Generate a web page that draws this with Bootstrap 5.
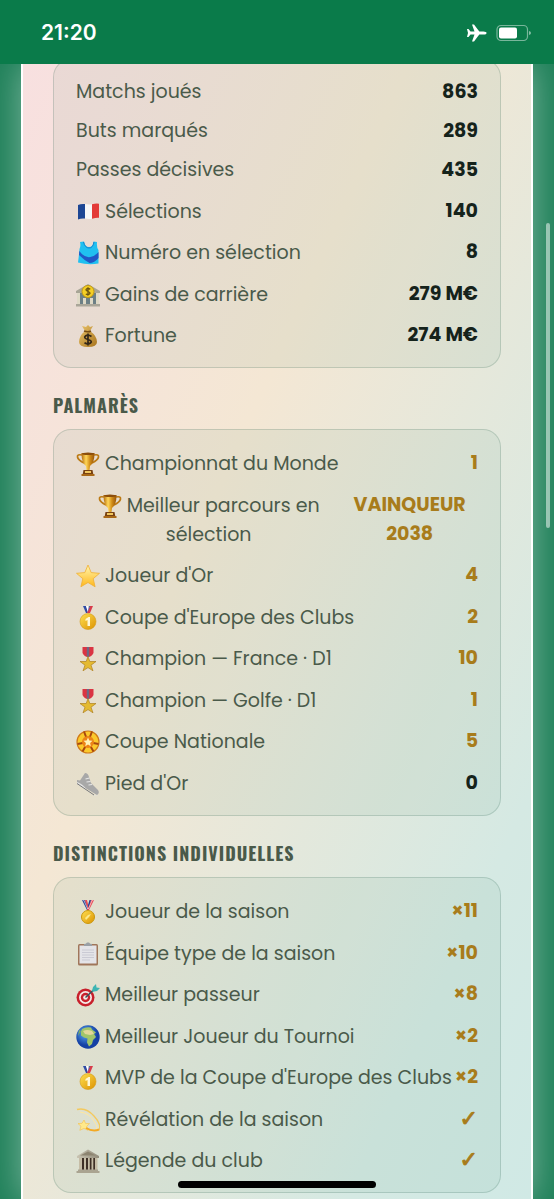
<!DOCTYPE html>
<html lang="fr">
<head>
<meta charset="utf-8">
<meta name="viewport" content="width=device-width, initial-scale=1">
<title>Palmarès du joueur</title>
<link href="https://cdn.jsdelivr.net/npm/bootstrap@5.3.0/dist/css/bootstrap.min.css" rel="stylesheet">
<style>
  :root { --pitch: #0a7b4a; --ink: #15231b; --label: #4a5a4a; --gold: #a87c1b; }
  body { background: #1f8059; color: var(--label); font-family: Poppins, Inter, "Noto Sans", sans-serif; font-size: 19px; line-height: 29px; }
  .status { background: var(--pitch); height: 64px; padding: 2px 22px 0 41px; color: #fff; }
  .clock { font: 600 21px/24px Inter, sans-serif; }
  .panel { margin: 0 21px; padding: 0 30px 6px; border: solid #fff; border-width: 0 2px;
    background: linear-gradient(to bottom right, #f8e0e0, #f4e7d4 38%, #d5e9e3 82%, #d0e9e5);
    box-shadow: 0 0 34px rgba(255,255,255,.42); }
  .stats { padding: 12px 22px; border: 1px solid rgba(20,80,55,.17); border-radius: 18px; background: rgba(10,110,65,.06); }
  .stats-first { margin-top: -5px; }
  .stats li { min-height: 39px; }
  .stats li.pic { min-height: 41px; }
  .stats li.pic:nth-child(even) { min-height: 42px; }
  .pic .name { padding-top: 2px; }
  .name { white-space: nowrap; }
  .ico { width: 24px; height: 24px; margin-right: 5px; vertical-align: -6px; }
  .val { color: var(--ink); font-weight: 700; }
  .won { color: var(--gold); }
  .tick { font: 700 22px/29px "DejaVu Sans", sans-serif; -webkit-text-stroke: 1px; }
  .wide { padding: 6px 0 5px; }
  .wide .name { flex: 1 1 0; white-space: normal; padding-left: 16px; padding-right: 16px; }
  .wide .val { flex: 0 0 34%; padding: 1px 12px 0; }
  .heading { margin: 25px 0 12px; font: 700 18px/24px Oswald, "Roboto Condensed", "Liberation Sans Narrow", sans-serif; letter-spacing: 1px; text-transform: uppercase; }
  .thumb { position: fixed; top: 223px; right: 4px; width: 4px; height: 305px; border-radius: 2px; background: rgba(255,255,255,.5); }
  .home { position: fixed; bottom: 11px; left: 50%; width: 198px; height: 7px; margin-left: -99px; border-radius: 4px; background: #000; }
</style>
</head>
<body class="min-vh-100 d-flex flex-column">

<svg width="0" height="0" class="position-absolute" aria-hidden="true">
  <defs>
    <linearGradient id="gold"><stop offset="0" stop-color="#b56c0c"/><stop offset=".35" stop-color="#ffd659"/><stop offset=".65" stop-color="#d18c17"/><stop offset="1" stop-color="#96540a"/></linearGradient>
    <linearGradient id="sun" x2="0" y2="1"><stop offset="0" stop-color="#fff6b0"/><stop offset="1" stop-color="#ffb81c"/></linearGradient>
    <linearGradient id="coin" x2="1" y2="1"><stop offset="0" stop-color="#ffe052"/><stop offset="1" stop-color="#dc9200"/></linearGradient>
    <linearGradient id="stone"><stop offset="0" stop-color="#c9c4b2"/><stop offset="1" stop-color="#938d7c"/></linearGradient>
    <linearGradient id="bag" x2="1" y2="1"><stop offset="0" stop-color="#eac46c"/><stop offset="1" stop-color="#a8741c"/></linearGradient>
    <radialGradient id="sea" cx=".4" cy=".35"><stop offset="0" stop-color="#5fb0f5"/><stop offset="1" stop-color="#1440a4"/></radialGradient>
  </defs>
  <symbol id="flag" viewBox="0 0 24 24"><path d="M2 5q3-1.500 7-1v14.500q-4-.5-7 1z" fill="#1d4694"/><path d="M9 4q3 .8 7 .3v14.500q-4 .5-7-.3z" fill="#f7f7f7"/><path d="M16 4.300q4-1.200 7-.6v14.100q-3-.3-7 1z" fill="#e33a38"/></symbol>
  <symbol id="shirt" viewBox="0 0 24 24"><path d="M4 1l4-.5Q9 6 13 6T17.500.5L21 1q-.5 6 1.500 8v13.500q-10 2-20.500-1Q3 14 3.500 8 5 5 4 1z" fill="#20c0f0"/><path d="M3.300 10q5 7 11 6 5-1 8.200-5v6q-4 5-9 5Q8 19 3 14z" fill="#2157c6"/><path d="M7.500 1Q9 7 13 7t5-6" fill="none" stroke="#1583cf"/></symbol>
  <symbol id="bank" viewBox="0 0 24 24"><path d="M0 8l12-7 12 7v2H0z" fill="#a8a596"/><path d="M3 10h18v11H3z" fill="#6d8086"/><path d="M1 10h3v12H1zM7 15h3v7H7zM14 15h3v7h-3zM20 10h3v12h-3z" fill="#ded9c6"/><path d="M0 21h24v2.500H0z" fill="#aaa699"/><circle cx="12" cy="8.500" r="6" fill="#f4cf25" stroke="#c29812"/><path d="M14.300 6.300Q12 4.800 10.500 6T12 8.500t1.500 2.400-3.700.2M12 4.300v8.400" fill="none" stroke="#6c5410" stroke-width="1.300"/></symbol>
  <symbol id="money" viewBox="0 0 24 24"><path d="M9 7L6 2l4 1 2-2 2 2 3-1-3 5q7 5 7 11 0 5-9 5t-9-5Q3 12 9 7z" fill="url(#bag)"/><path d="M8 7q4 1.500 7 0" fill="none" stroke="#764c12" stroke-width="1.600"/><path d="M15.500 12.500Q12 10 9.500 12T12 15.500t2.500 3.500-6-.3M12 9.500v12" fill="none" stroke="#322618" stroke-width="1.700"/></symbol>
  <symbol id="cup" viewBox="0 0 24 24"><path d="M6 3Q1 2 1.500 5T8 11M18 3q5-1 4.500 2T16 11" fill="none" stroke="#bc7a14" stroke-width="1.700"/><path d="M5.500 1h13q0 10-4.500 13l-.5 4h-3L10 14Q5.500 11 5.500 1z" fill="url(#gold)"/><ellipse cx="12" cy="1.800" rx="6.500" ry="1.300" fill="#8b4d0b"/><path d="M7.500 18h9l1 5.500h-11z" fill="#794112"/><path d="M5.500 22h13v2h-13z" fill="#a96817"/><path d="M9 19h6v2H9z" fill="#f1c75e"/></symbol>
  <symbol id="star" viewBox="0 0 24 24"><path d="M12 1l3.200 7.600 8.300.7-6.300 5.400 1.900 8.100L12 18.500l-7.100 4.300 1.900-8.100L.5 9.300l8.300-.7z" fill="url(#sun)" stroke="#f0ae32" stroke-width=".8" stroke-linejoin="round"/></symbol>
  <symbol id="first" viewBox="0 0 24 24"><path d="M7 0h3l3 7h-3z" fill="#304ca4"/><path d="M10 0h2l1 5-1 2z" fill="#fff"/><path d="M17 0h-3l-3 7h3z" fill="#d83c4b"/><path d="M13 0h1l-2 6z" fill="#3855b0"/><circle cx="12" cy="15.500" r="8" fill="url(#coin)" stroke="#d39b17" stroke-width=".6"/><path d="M9.500 13l3-2h1.500v9h-2.500v-6l-2 1z" fill="#fff8d7"/></symbol>
  <symbol id="order" viewBox="0 0 24 24"><path d="M6.500 0h11v6q-2 4-5.500 4T6.500 6z" fill="#da3442"/><path d="M10.800 0h2.400v10h-2.400z" fill="#6d6884"/><path d="M12 9.500l1.800 5H20l-5 3.700 2 5.600-5-3.200-5 3.200 2-5.600-5-3.700h6.200z" fill="#e4ba31" stroke="#af8020" stroke-width=".7"/></symbol>
  <symbol id="rosette" viewBox="0 0 24 24"><circle cx="12" cy="12" r="11" fill="#fbc92c" stroke="#d07a18" stroke-width="1.200"/><path d="M12 12L8 1.500M12 12l4-10.500M12 12l10.500 2M12 12l5.500 9.500M12 12l-5.500 9.500M12 12L1.500 14" stroke="#a8480f" stroke-width="2"/><circle cx="12" cy="12" r="6" fill="#ec8417"/><path d="M12 7.500l1.300 3 3.200.3-2.400 2.200.7 3.300-2.800-1.800-2.800 1.800.7-3.300-2.400-2.200 3.200-.3z" fill="#fff3ba"/></symbol>
  <symbol id="shoe" viewBox="0 0 24 24"><path d="M1 8l3 .5L9 1q3 0 4 4l2 6 7 7q2 3-1 5L1 11z" fill="#a8a8a8"/><path d="M1 10q6 2 10 8l8 5.500q2 .5 3-.5-1 2-4 .5L1 12z" fill="#e2e2e2"/><path d="M1 11.500L18 23" stroke="#777"/><path d="M9.500 7l4-1M10.500 10l4-.5M12.500 13l3.500-.5" stroke="#e6e6e6" stroke-width="1.200"/></symbol>
  <symbol id="medal" viewBox="0 0 24 24"><path d="M6 0h3l4 10h-2z" fill="#223b91"/><path d="M9 0h2l2 8-1 2z" fill="#e94652"/><path d="M18 0h-3l-4 10h2z" fill="#e94652"/><path d="M15 0h-1.500L12 5l.5 3z" fill="#223b91"/><path d="M6.700 0h1l4 9M17.300 0h-1l-4 9" fill="none" stroke="#fff" stroke-width=".6"/><circle cx="12" cy="17" r="6.500" fill="url(#coin)" stroke="#c9970e"/><path d="M9 18l3-3 3-1-2 3-3 3z" fill="#fbe98a"/></symbol>
  <symbol id="board" viewBox="0 0 24 24"><rect x="2" y="2" width="20" height="21.500" rx="1.500" fill="#a0765a"/><path d="M3.500 3.500h17v18h-17z" fill="#e4e4e8"/><path d="M6 8h12M6 10.500h12M6 13h12M6 15.500h12M6 18h8" stroke="#c3c3ce" stroke-width=".8"/><path d="M8 4V2q2 0 3-1.500h2Q14 2 16 2v2z" fill="#9aa0a6"/></symbol>
  <symbol id="target" viewBox="0 0 24 24"><circle cx="9.500" cy="14.500" r="9" fill="#c8202c"/><circle cx="9.500" cy="14.500" r="6.500" fill="#f5e9e6"/><circle cx="9.500" cy="14.500" r="4.700" fill="#c8202c"/><circle cx="9.500" cy="14.500" r="2.300" fill="#f5e9e6"/><path d="M9.500 14.500L18 6.500" stroke="#37545b" stroke-width="1.500"/><path d="M16 8l1-4 3-3 .5 3.500L24 5l-3 3-4 .7z" fill="#3cb5b3"/></symbol>
  <symbol id="globe" viewBox="0 0 24 24"><circle cx="12" cy="12" r="11.700" fill="url(#sea)"/><path d="M6 4q4-2.500 9-1.500l1 2 4 3-2 1.500 2 3-3 3-1 4-3 2.500-2-4 .5-4-3.500-1-3-2q-1-3 1-6.500z" fill="#a1c56a"/><path d="M7 6q4-2 9 0l2 3-4 1-5-1z" fill="#e3d79a"/><path d="M3 5l2 1-3 5z" fill="#7dac63"/></symbol>
  <symbol id="dizzy" viewBox="0 0 24 24"><path d="M1 1.500Q10-1 18 8t5 14" fill="none" stroke="#f4c95e" stroke-width="1.400"/><path d="M4 4q9 1 14 9t2 8" fill="none" stroke="#ffe7a0" stroke-width="1"/><path d="M8 12l1.600 3.500 3.900.1-2.800 2.800 1.300 3.900-4-1.900-4.200 1.900 1.200-4L2 15.600l4-.3z" fill="#ffe98a" stroke="#f5c04d" stroke-width=".6"/><path d="M10 20q7 4 13 1.500" fill="none" stroke="#f3a923" stroke-width="2"/></symbol>
  <symbol id="temple" viewBox="0 0 24 24"><path d="M1 7l11-6.500L23 7v2H1z" fill="url(#stone)"/><path d="M4 6.500l8-4 8 4z" fill="#8c8470"/><path d="M4 9h16v12H4z" fill="#3e3026"/><path d="M3 9h3v12H3zM8 9h2v12H8zM12 9h1.800v12H12zM15.500 9h1.800v12h-1.800zM19 9h2.500v12H19z" fill="#c6bda6"/><path d="M2 20.500h20V22h1.500v2H.5v-2H2z" fill="#aaa491"/></symbol>
</svg>

<header class="status sticky-top d-flex align-items-center justify-content-between">
  <time class="clock">21:20</time>
  <div class="d-flex align-items-center gap-2">
    <svg width="22" height="20" viewBox="0 0 22 20" role="img" aria-label="Mode avion"><path d="M20.500 10q0 1.500-3 1.500h-4.200L8 18.500H6l2.500-7H4.500L2.500 14H1l1-4-1-4h1.500l2 2.500h4L6 1.500h2l5.300 7h4.200q3 0 3 1.500z" fill="#fff"/></svg>
    <svg width="36" height="18" viewBox="0 0 36 18" role="img" aria-label="Batterie"><rect x="1" y="1.500" width="30.500" height="15" rx="4" fill="none" stroke="#fff" stroke-opacity=".45" stroke-width="1.200"/><rect x="3" y="3.500" width="18" height="11" rx="2" fill="#fff"/><path d="M33 7q2 .4 2 2t-2 2z" fill="#fff" fill-opacity=".5"/></svg>
  </div>
</header>

<main class="panel flex-grow-1">
  <ul class="stats stats-first list-unstyled mb-0">
    <li class="d-flex justify-content-between align-items-center"><span class="name">Matchs joués</span><span class="val">863</span></li>
    <li class="d-flex justify-content-between align-items-center"><span class="name">Buts marqués</span><span class="val">289</span></li>
    <li class="d-flex justify-content-between align-items-center"><span class="name">Passes décisives</span><span class="val">435</span></li>
    <li class="pic d-flex justify-content-between align-items-center"><span class="name"><svg class="ico"><use href="#flag"/></svg>Sélections</span><span class="val">140</span></li>
    <li class="pic d-flex justify-content-between align-items-center"><span class="name"><svg class="ico"><use href="#shirt"/></svg>Numéro en sélection</span><span class="val">8</span></li>
    <li class="pic d-flex justify-content-between align-items-center"><span class="name"><svg class="ico"><use href="#bank"/></svg>Gains de carrière</span><span class="val">279 M€</span></li>
    <li class="pic d-flex justify-content-between align-items-center"><span class="name"><svg class="ico"><use href="#money"/></svg>Fortune</span><span class="val">274 M€</span></li>
  </ul>

  <h2 class="heading">Palmarès</h2>
  <ul class="stats list-unstyled mb-0">
    <li class="pic d-flex justify-content-between align-items-center"><span class="name"><svg class="ico"><use href="#cup"/></svg>Championnat du Monde</span><span class="val won">1</span></li>
    <li class="pic wide d-flex text-center"><span class="name"><svg class="ico"><use href="#cup"/></svg>Meilleur parcours en sélection</span><span class="val won">VAINQUEUR 2038</span></li>
    <li class="pic d-flex justify-content-between align-items-center"><span class="name"><svg class="ico"><use href="#star"/></svg>Joueur d'Or</span><span class="val won">4</span></li>
    <li class="pic d-flex justify-content-between align-items-center"><span class="name"><svg class="ico"><use href="#first"/></svg>Coupe d'Europe des Clubs</span><span class="val won">2</span></li>
    <li class="pic d-flex justify-content-between align-items-center"><span class="name"><svg class="ico"><use href="#order"/></svg>Champion — France · D1</span><span class="val won">10</span></li>
    <li class="pic d-flex justify-content-between align-items-center"><span class="name"><svg class="ico"><use href="#order"/></svg>Champion — Golfe · D1</span><span class="val won">1</span></li>
    <li class="pic d-flex justify-content-between align-items-center"><span class="name"><svg class="ico"><use href="#rosette"/></svg>Coupe Nationale</span><span class="val won">5</span></li>
    <li class="pic d-flex justify-content-between align-items-center"><span class="name"><svg class="ico"><use href="#shoe"/></svg>Pied d'Or</span><span class="val">0</span></li>
  </ul>

  <h2 class="heading">Distinctions individuelles</h2>
  <ul class="stats list-unstyled mb-0">
    <li class="pic d-flex justify-content-between align-items-center"><span class="name"><svg class="ico"><use href="#medal"/></svg>Joueur de la saison</span><span class="val won">×11</span></li>
    <li class="pic d-flex justify-content-between align-items-center"><span class="name"><svg class="ico"><use href="#board"/></svg>Équipe type de la saison</span><span class="val won">×10</span></li>
    <li class="pic d-flex justify-content-between align-items-center"><span class="name"><svg class="ico"><use href="#target"/></svg>Meilleur passeur</span><span class="val won">×8</span></li>
    <li class="pic d-flex justify-content-between align-items-center"><span class="name"><svg class="ico"><use href="#globe"/></svg>Meilleur Joueur du Tournoi</span><span class="val won">×2</span></li>
    <li class="pic d-flex justify-content-between align-items-center"><span class="name"><svg class="ico"><use href="#first"/></svg>MVP de la Coupe d'Europe des Clubs</span><span class="val won">×2</span></li>
    <li class="pic d-flex justify-content-between align-items-center"><span class="name"><svg class="ico"><use href="#dizzy"/></svg>Révélation de la saison</span><span class="val won tick">✓</span></li>
    <li class="pic d-flex justify-content-between align-items-center"><span class="name"><svg class="ico"><use href="#temple"/></svg>Légende du club</span><span class="val won tick">✓</span></li>
  </ul>
</main>

<div class="thumb"></div>
<div class="home"></div>
<script src="https://cdn.jsdelivr.net/npm/bootstrap@5.3.0/dist/js/bootstrap.bundle.min.js"></script>
</body>
</html>
